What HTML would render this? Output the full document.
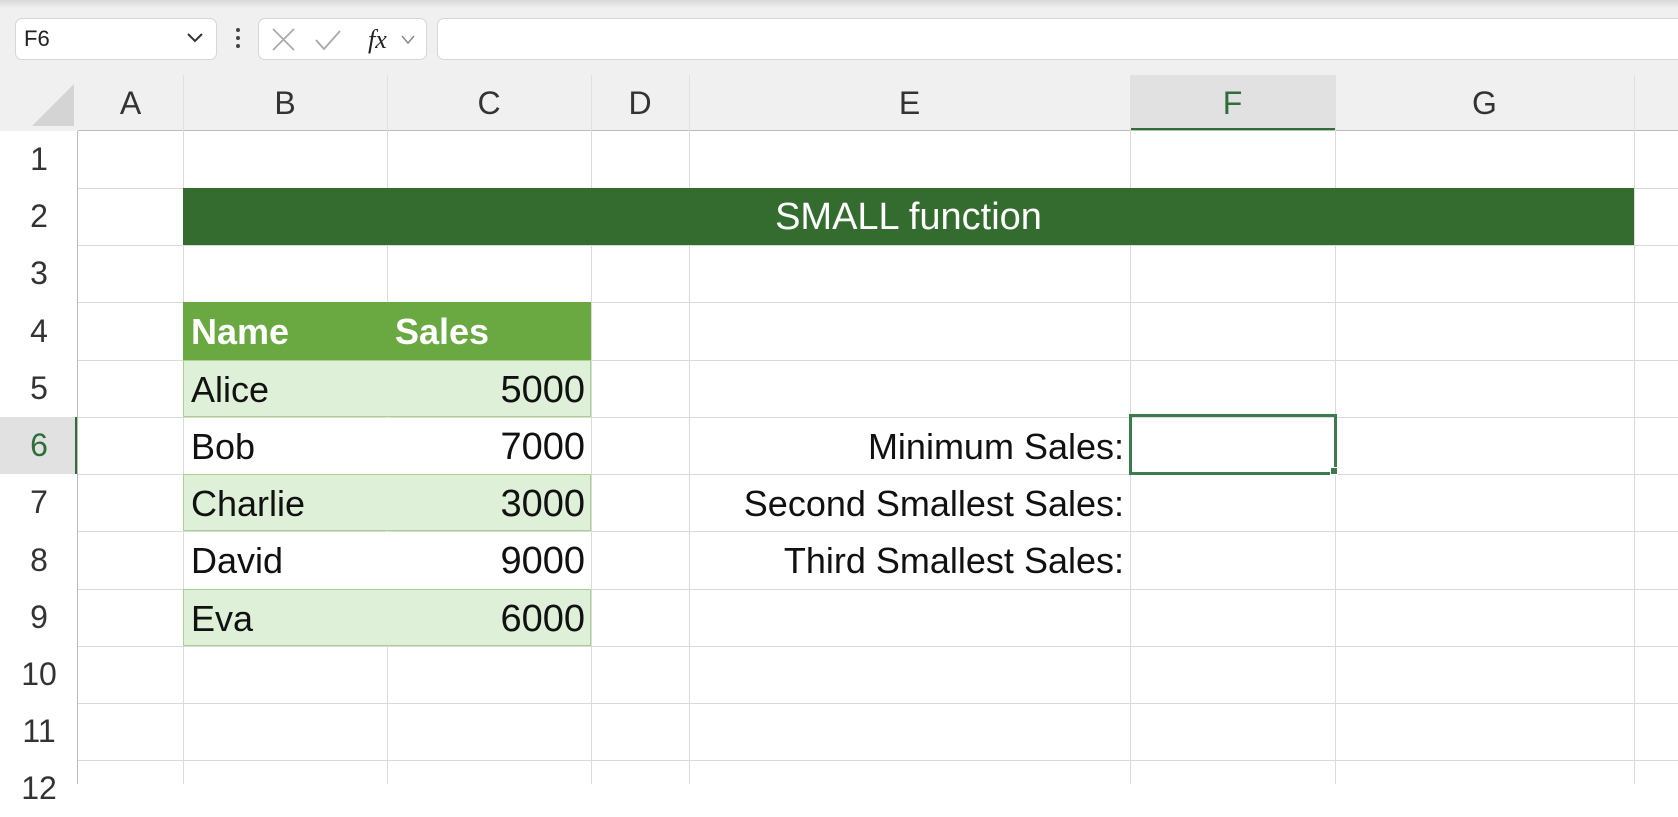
<!DOCTYPE html>
<html><head><meta charset="utf-8"><style>
*{box-sizing:border-box;margin:0;padding:0}
body{width:1678px;height:784px;overflow:hidden;background:#fff;font-family:"Liberation Sans",sans-serif;position:relative}
.a{position:absolute}
.top{left:0;top:0;width:1678px;height:131px;background:#f0f0f0}
.box{background:#fff;border:1px solid #d6d6d6;border-radius:7px}
.hl{position:absolute;background:#e1e1e1}
.v{position:absolute;width:1px;background:#dadada;top:131px;height:653px}
.h{position:absolute;height:1px;background:#dadada;left:78px;width:1600px}
.ch{position:absolute;top:75px;height:56px;font-size:32px;color:#333;display:flex;align-items:center;justify-content:center}
.rh{position:absolute;left:0;width:78px;font-size:32px;color:#333;display:flex;align-items:center;justify-content:center}
.t{position:absolute;font-size:36px;color:#111;display:flex;align-items:center;height:57px;padding-top:3px}
</style></head><body>
<div class="a top"></div>
<div class="a" style="left:0;top:0;width:1678px;height:8px;background:linear-gradient(#d8d8d8,#f0f0f0)"></div>
<div class="a box" style="left:15px;top:18px;width:202px;height:42px"></div>
<div class="a" style="left:24px;top:22px;font-size:22px;color:#222;line-height:34px">F6</div>
<svg class="a" style="left:186px;top:32px" width="18" height="12"><path d="M2 2 L9 9 L16 2" stroke="#333" stroke-width="2" fill="none"/></svg>
<div class="a" style="left:236px;top:28px;width:4px;height:4px;background:#444;border-radius:2px"></div>
<div class="a" style="left:236px;top:36px;width:4px;height:4px;background:#444;border-radius:2px"></div>
<div class="a" style="left:236px;top:44px;width:4px;height:4px;background:#444;border-radius:2px"></div>
<div class="a box" style="left:258px;top:18px;width:169px;height:42px"></div>
<svg class="a" style="left:270px;top:26px" width="150" height="28"><path d="M3 3 L24 24 M24 3 L3 24" stroke="#aaa" stroke-width="1.8"/><path d="M46 14 L54 23 L70 5" stroke="#aaa" stroke-width="1.8" fill="none"/><text x="98" y="22" font-family="Liberation Serif" font-style="italic" font-size="26" fill="#222">fx</text><path d="M132 10 L138 17 L144 10" stroke="#888" stroke-width="1.5" fill="none"/></svg>
<div class="a box" style="left:437px;top:18px;width:1260px;height:42px"></div>
<svg class="a" style="left:24px;top:80px" width="54" height="50"><path d="M50 4 L50 46 L8 46 Z" fill="#d4d4d4"/></svg>
<div class="hl" style="left:1130px;top:75px;width:205px;height:56px"></div>
<div class="a" style="left:1130px;top:128px;width:205px;height:3px;background:#2f6e3b"></div>
<div class="hl" style="left:0;top:417px;width:78px;height:57px"></div>
<div class="a" style="left:75px;top:417px;width:3px;height:57px;background:#2f6e3b"></div>
<div class="a" style="left:78px;top:130px;width:1600px;height:1px;background:#bbb"></div>
<div class="a" style="left:77px;top:131px;width:1px;height:653px;background:#bbb"></div>
<div class="ch" style="left:78px;width:105px">A</div>
<div class="ch" style="left:183px;width:204px">B</div>
<div class="ch" style="left:387px;width:204px">C</div>
<div class="ch" style="left:591px;width:98px">D</div>
<div class="ch" style="left:689px;width:441px">E</div>
<div class="ch" style="left:1130px;width:205px;color:#2f6e3b">F</div>
<div class="ch" style="left:1335px;width:299px">G</div>
<div class="rh" style="top:131px;height:57px">1</div>
<div class="rh" style="top:188px;height:57px">2</div>
<div class="rh" style="top:245px;height:57px">3</div>
<div class="rh" style="top:302px;height:58px">4</div>
<div class="rh" style="top:360px;height:57px">5</div>
<div class="rh" style="top:417px;height:57px;color:#2f6e3b">6</div>
<div class="rh" style="top:474px;height:57px">7</div>
<div class="rh" style="top:531px;height:58px">8</div>
<div class="rh" style="top:589px;height:57px">9</div>
<div class="rh" style="top:646px;height:57px">10</div>
<div class="rh" style="top:703px;height:57px">11</div>
<div class="rh" style="top:760px;height:57px">12</div>
<div class="v" style="left:183px"></div><div class="v" style="left:387px"></div><div class="v" style="left:591px"></div><div class="v" style="left:689px"></div><div class="v" style="left:1130px"></div><div class="v" style="left:1335px"></div><div class="v" style="left:1634px"></div>
<div class="v" style="left:183px;top:75px;height:56px;background:#e0e0e0"></div><div class="v" style="left:387px;top:75px;height:56px;background:#e0e0e0"></div><div class="v" style="left:591px;top:75px;height:56px;background:#e0e0e0"></div><div class="v" style="left:689px;top:75px;height:56px;background:#e0e0e0"></div><div class="v" style="left:1130px;top:75px;height:56px;background:#e0e0e0"></div><div class="v" style="left:1335px;top:75px;height:56px;background:#e0e0e0"></div><div class="v" style="left:1634px;top:75px;height:56px;background:#e0e0e0"></div>
<div class="h" style="top:188px"></div><div class="h" style="top:245px"></div><div class="h" style="top:302px"></div><div class="h" style="top:360px"></div><div class="h" style="top:417px"></div><div class="h" style="top:474px"></div><div class="h" style="top:531px"></div><div class="h" style="top:589px"></div><div class="h" style="top:646px"></div><div class="h" style="top:703px"></div><div class="h" style="top:760px"></div>
<div class="a" style="left:183px;top:188px;width:1451px;height:57px;background:#346b2f;color:#fff;font-size:38px;display:flex;align-items:center;justify-content:center;padding-top:2px">SMALL function</div>
<div class="a" style="left:183px;top:302px;width:408px;height:58px;background:#6aa841"></div>
<div class="a" style="left:183px;top:360px;width:408px;height:57px;background:#dff0d8;border:1px solid #a9d08e"></div>
<div class="a" style="left:183px;top:474px;width:408px;height:57px;background:#dff0d8;border:1px solid #a9d08e"></div>
<div class="a" style="left:183px;top:589px;width:408px;height:57px;background:#dff0d8;border:1px solid #a9d08e"></div>
<div class="a" style="left:387px;top:417px;width:1px;height:57px;background:#fff"></div>
<div class="a" style="left:387px;top:531px;width:1px;height:58px;background:#fff"></div>
<div class="t" style="left:191px;top:302px;color:#fff;font-weight:bold">Name</div>
<div class="t" style="left:395px;top:302px;color:#fff;font-weight:bold">Sales</div>
<div class="t" style="left:191px;top:360px">Alice</div><div class="t" style="left:387px;top:360px;width:198px;justify-content:flex-end;font-size:38px">5000</div>
<div class="t" style="left:191px;top:417px">Bob</div><div class="t" style="left:387px;top:417px;width:198px;justify-content:flex-end;font-size:38px">7000</div>
<div class="t" style="left:191px;top:474px">Charlie</div><div class="t" style="left:387px;top:474px;width:198px;justify-content:flex-end;font-size:38px">3000</div>
<div class="t" style="left:191px;top:531px">David</div><div class="t" style="left:387px;top:531px;width:198px;justify-content:flex-end;font-size:38px">9000</div>
<div class="t" style="left:191px;top:589px">Eva</div><div class="t" style="left:387px;top:589px;width:198px;justify-content:flex-end;font-size:38px">6000</div>
<div class="t" style="left:600px;top:417px;width:524px;justify-content:flex-end">Minimum Sales:</div>
<div class="t" style="left:600px;top:474px;width:524px;justify-content:flex-end">Second Smallest Sales:</div>
<div class="t" style="left:600px;top:531px;width:524px;justify-content:flex-end">Third Smallest Sales:</div>
<div class="a" style="left:1129px;top:414px;width:208px;height:61px;border:3px solid #3d7a4c"></div>
<div class="a" style="left:1330px;top:467px;width:8px;height:8px;background:#3d7a4c;border:1px solid #fff"></div>
</body></html>
